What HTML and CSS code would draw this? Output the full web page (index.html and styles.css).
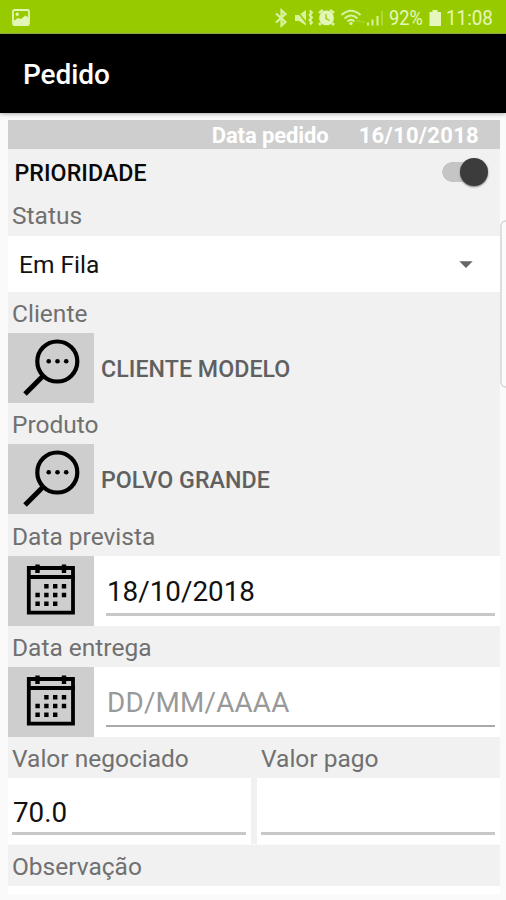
FILE: index.html
```html
<!DOCTYPE html>
<html lang="pt-BR">
<head>
<meta charset="utf-8">
<title>Pedido</title>
<link rel="stylesheet" href="styles.css">
</head>
<body>
<svg class="defs" width="0" height="0" aria-hidden="true">
  <symbol id="search" viewBox="0 0 86 70">
    <circle cx="49.300" cy="28.500" r="20" fill="none" stroke="#000" stroke-width="4.200"/>
    <path d="M35 43 17 61" stroke="#000" stroke-width="5" fill="none"/>
    <circle cx="40.700" cy="28.200" r="2.300"/><circle cx="49.500" cy="28.200" r="2.300"/><circle cx="58.200" cy="28.200" r="2.300"/>
  </symbol>
  <symbol id="calendar" viewBox="0 0 86 70">
    <path d="M20.800 12H65V56.700H20.800ZM19 21H67" fill="none" stroke="#000" stroke-width="3.800"/>
    <path d="M29.500 8.500v8.500M56 8.500v8.500" stroke="#000" stroke-width="4.400"/>
    <path d="M36.200 30.300h22M27.400 39h31M27.400 47.700h22" stroke="#000" stroke-width="4.400" stroke-dasharray="4.400 4.400"/>
  </symbol>
</svg>
<header class="status">
  <svg class="picture" width="18" height="17" viewBox="0 0 18 17"><rect x="1" y="1" width="16" height="15" rx="1.500" fill="none" stroke="#e2f6b5" stroke-width="1.800"/><circle cx="5.200" cy="5.300" r="1.700" fill="#e2f6b5"/><path d="M1.500 12 6 9l3 1 4.500-3.500 3 2V16h-15Z" fill="#e2f6b5"/></svg>
  <svg class="signals" width="112" height="20" viewBox="0 0 112 20" fill="none" stroke="#d9f2a0">
    <path d="M2 5.500 11.500 14 7.500 17.500V2.500L11.500 6 2 14.500" stroke-width="2.200"/>
    <path d="M21 7h4l7-5v15.500L25 13h-4Z" fill="#d9f2a0" stroke="none"/>
    <path d="m21.500 1 11 14" stroke="#97cb00" stroke-width="1.600"/>
    <path d="m35.800 2.500 1.900 2-1.900 2.500 1.900 2.500-1.900 2.500 1.900 2.500-1.500 2" stroke-width="2.400"/>
    <circle cx="52.500" cy="9.900" r="7.400" fill="#e2f6b5" stroke="none"/>
    <path d="m45 5 4-3M56 2l4 3M47 15l-2 2M58 15l2 2" stroke-width="2.800"/>
    <path d="M52 6v4.500l3.500 2" stroke="#97cb00" stroke-width="1.300"/>
    <path d="M67.500 7Q77-1.500 86.500 7M70.500 10.500q6.500-6 13 0M73.500 13.500q3.500-3.200 7 0" stroke-width="2.100"/>
    <circle cx="77" cy="15.500" r="1.700" fill="#d9f2a0" stroke="none"/>
    <path d="m83 14 1.700-2 1.700 2M87 13l1.700 2 1.700-2" stroke="#b5dd4c" stroke-width="1"/>
    <path d="M94 17.500v-3M98.500 17.500v-6M103.500 17.500V8" stroke-width="2"/><path d="M108 17.500V3" stroke="#b3dc48" stroke-width="1.600"/>
  </svg>
  <span class="percent">92%</span>
  <svg class="battery" width="12" height="18" viewBox="0 0 12 18"><path d="M3.500 1h5v2H12v14H.5V3h3Z" fill="#e5f7bd"/></svg>
  <span class="clock">11:08</span>
</header>
<div class="appbar"><h1>Pedido</h1></div>
<main class="form">
  <div class="datebar"><span class="dname">Data pedido</span><span class="dval">16/10/2018</span></div>
  <div class="priority"><span>PRIORIDADE</span><div class="toggle"><i></i></div></div>
  <label class="label first"><span>Status</span></label>
  <div class="select"><span>Em Fila</span><svg width="14" height="7" viewBox="0 0 14 7"><path d="M.3.300h13.400L7 7Z" fill="#666"/></svg></div>
  <label class="label"><span>Cliente</span></label>
  <div class="row"><button class="tile"><svg><use href="#search"/></svg></button><strong>CLIENTE MODELO</strong></div>
  <label class="label"><span>Produto</span></label>
  <div class="row"><button class="tile"><svg><use href="#search"/></svg></button><strong>POLVO GRANDE</strong></div>
  <label class="label tall"><span>Data prevista</span></label>
  <div class="row white"><button class="tile"><svg><use href="#calendar"/></svg></button><div class="input date"><span>18/10/2018</span></div></div>
  <label class="label"><span>Data entrega</span></label>
  <div class="row white"><button class="tile"><svg><use href="#calendar"/></svg></button><div class="input date empty"><span>DD/MM/AAAA</span></div></div>
  <div class="pair"><label class="label"><span>Valor negociado</span></label><label class="label"><span>Valor pago</span></label></div>
  <div class="pair fields"><div class="cell"><div class="input"><span>70.0</span></div></div><div class="cell"><div class="input"></div></div></div>
  <label class="label last"><span>Observação</span></label>
  <div class="note"></div>
</main>
<div class="edge"></div>
</body>
</html>
```

FILE: styles.css
```css
* { box-sizing: border-box; }
body { margin: 0; width: 506px; height: 900px; overflow: hidden; position: relative; background: #fafafa; font-family: Roboto, sans-serif; color: #111; }
.defs { position: absolute; }
.status { height: 34px; background: #97cb00; border-bottom: 1px solid #86ad18; display: flex; align-items: center; color: #e5f7bd; font-size: 20px; padding: 2px 12px 0 12px; }
.status svg, .status span { flex: none; display: block; }
.signals { margin-left: auto; margin-right: 3px; }
.percent { width: 36px; white-space: nowrap; transform: scaleX(.91); transform-origin: left; }
.battery { margin: 0 5px 0 4px; }
.clock { width: 48px; white-space: nowrap; transform: scaleX(.94); transform-origin: left; }
.appbar { height: 79px; background: #000; padding: 0 23px; display: flex; align-items: center; box-shadow: 0 1px 4px #aaa; }
h1 { margin: 0; color: #fff; font-size: 28px; font-weight: 500; line-height: 34px; padding-top: 3px; letter-spacing: -.1px; }
.form { margin: 7px 6px 0 8px; background: #f1f1f1; }
.datebar { height: 29px; background: #cecece; color: #fff; font-weight: 700; font-size: 22px; line-height: 31px; display: flex; justify-content: flex-end; padding-right: 21px; gap: 30px; }
.dname { letter-spacing: -.1px; }
.dval { letter-spacing: .3px; }
.priority { height: 48px; padding: 0 12px 0 6.500px; display: flex; align-items: center; justify-content: space-between; font-size: 23.200px; font-weight: 500; letter-spacing: .05px; color: #090909; }
.priority span { margin-bottom: 1px; }
.toggle { width: 46px; height: 28px; display: flex; align-items: center; justify-content: flex-end; margin-bottom: 3px; background: radial-gradient(circle at 10px 14px, #c5c5c5 9.500px, transparent 10px), linear-gradient(#c5c5c5, #c5c5c5) 10px 50% / 20px 20px no-repeat; }
.toggle i { width: 28px; height: 28px; border-radius: 50%; background: #3c3c3c; box-shadow: 0 1px 2px #777; }
.label { display: block; height: 41px; padding-left: 4px; font-size: 24.500px; line-height: 43px; color: #707070; white-space: nowrap; }
.first { height: 39px; line-height: 38px; }
.tall { height: 42px; line-height: 45px; }
.select { height: 56px; background: #fff; padding: 0 27px 0 11px; display: flex; align-items: center; justify-content: space-between; font-size: 24.500px; }
.row { height: 70px; display: flex; align-items: center; }
.white { background: #fff; }
.tile { width: 86px; height: 70px; flex: none; border: 0; padding: 0; background: #cecece; }
.tile svg { display: block; width: 86px; height: 70px; }
.row strong { margin-left: 7px; padding-top: 2px; color: #606060; font-size: 23.200px; font-weight: 500; letter-spacing: .05px; white-space: nowrap; }
.input { border-bottom: 3px solid #c8c8c8; font-size: 27.800px; }
.date { height: 45px; margin: 4px 5px 0 12px; flex: 1; line-height: 42px; padding-left: 1px; }
.empty { color: #999; border-bottom: 2px solid #aaa; letter-spacing: .2px; }
.pair { display: grid; grid-template-columns: 243px 243px; column-gap: 6px; }
.fields { height: 66px; }
.cell { background: #fff; padding: 0 5px 0 4px; }
.cell .input { height: 57px; line-height: 70px; padding-left: 1px; }
.last { height: 42px; line-height: 44px; border-top: 1px solid #fafafa; }
.note { height: 8px; background: #fff; }
.edge { position: absolute; left: 500px; top: 220px; width: 12px; height: 168px; border: 2px solid #dedede; border-radius: 6px; background: #fbfbfb; }
```
